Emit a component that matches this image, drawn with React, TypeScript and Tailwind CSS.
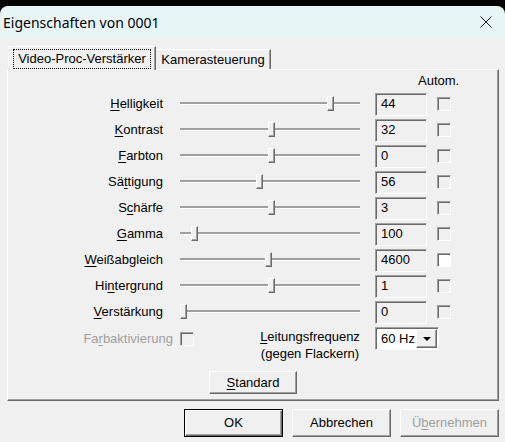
const ROWS = [
  { label: "Helligkeit", key: 0, value: "44", thumb: 150 },
  { label: "Kontrast", key: 0, value: "32", thumb: 91 },
  { label: "Farbton", key: 0, value: "0", thumb: 91 },
  { label: "Sättigung", key: 2, value: "56", thumb: 79 },
  { label: "Schärfe", key: 1, value: "3", thumb: 91 },
  { label: "Gamma", key: 0, value: "100", thumb: 14 },
  { label: "Weißabgleich", key: 0, value: "4600", thumb: 88, white: true },
  { label: "Hintergrund", key: 2, value: "1", thumb: 91 },
  { label: "Verstärkung", key: 0, value: "0", thumb: 3 },
];

const SUNKEN =
  "border border-t-[#a0a0a0] border-l-[#a0a0a0] border-r-white border-b-white shadow-[inset_1px_1px_0_#696969]";
const RAISED =
  "border border-t-white border-l-white border-r-[#696969] border-b-[#696969] shadow-[inset_-1px_-1px_0_#a0a0a0]";

function Key({ text, at }: { text: string; at: number }) {
  return (
    <>
      {text.slice(0, at)}
      <span className="underline underline-offset-[2px]">{text[at]}</span>
      {text.slice(at + 1)}
    </>
  );
}

function Slider({ thumb }: { thumb: number }) {
  return (
    <div className="relative ml-[17px] h-[18px] w-[180px]">
      <div className="absolute inset-x-0 top-[7px] h-[3px] border-b border-white bg-[#a0a0a0]" />
      <div
        className={`absolute top-[1px] h-[15px] w-[7px] bg-[#f0f0f0] ${RAISED}`}
        style={{ left: thumb - 3 }}
      />
    </div>
  );
}

function Check({ white }: { white?: boolean }) {
  return <div className={`h-[14px] w-[14px] ${SUNKEN} ${white ? "bg-white" : "bg-[#f0f0f0]"}`} />;
}

export default function App() {
  return (
    <div className="h-[442px] w-[505px] overflow-hidden bg-black pt-[6px] font-['Liberation_Sans',Arial,sans-serif] text-[13px] text-black">
      {/* title bar */}
      <div className="flex h-[32px] items-center justify-between rounded-t-[8px] bg-[#e8f5f7] pl-[3px] pr-[13px]">
        <span className="font-['Noto_Sans',sans-serif] text-[14px]">Eigenschaften von 0001</span>
        <svg width="12" height="12" viewBox="0 0 12 12">
          <path d="M0.5 0.5L11.5 11.5M11.5 0.5L0.5 11.5" stroke="#1b1b1b" strokeWidth="1" />
        </svg>
      </div>

      <div className="flex h-[404px] flex-col bg-[#f0f0f0] pl-[7px] pr-[6px] pt-[8px]">
        {/* tabs */}
        <div className="flex h-[23px] items-end pl-[1px]">
          <div className="relative z-10 -mb-px flex h-[24px] w-[148px] items-center justify-center border-l border-t border-r border-l-white border-t-white border-r-[#696969] bg-[#f0f0f0] shadow-[inset_-1px_0_0_#a0a0a0]">
            <span className="border border-dotted border-black px-[4px] leading-[18px]">Video-Proc-Verstärker</span>
          </div>
          <div className="flex h-[20px] w-[115px] items-center justify-center border-t border-r border-t-white border-r-[#696969] shadow-[inset_-1px_0_0_#a0a0a0]">
            Kamerasteuerung
          </div>
        </div>

        {/* panel */}
        <div className={`h-[332px] ${RAISED}`}>
          <div className="flex h-[21px] items-center pl-[410px]">Autom.</div>
          {ROWS.map((r) => (
            <div key={r.label} className="flex h-[26px] items-center">
              <div className="w-[155px] text-right">
                <Key text={r.label} at={r.key} />
              </div>
              <Slider thumb={r.thumb} />
              <div className={`ml-[15px] flex h-[23px] w-[52px] items-center bg-[#f0f0f0] pl-[5px] ${SUNKEN}`}>
                {r.value}
              </div>
              <div className="ml-[10px]">
                <Check white={r.white} />
              </div>
            </div>
          ))}

          <div className="mt-[2px] flex items-start">
            <div className="flex h-[23px] items-center">
              <span className="w-[165px] text-right text-[#a0a0a0]">
                <Key text="Farbaktivierung" at={2} />
              </span>
              <div className="ml-[7px]">
                <Check />
              </div>
            </div>
            <div className="ml-[61px] mt-[1px] w-[110px] text-center leading-[17px]">
              <Key text="Leitungsfrequenz" at={0} />
              <br />
              (gegen Flackern)
            </div>
            <div className={`ml-[10px] flex h-[23px] w-[64px] items-center bg-white pr-[1px] ${SUNKEN}`}>
              <span className="flex-1 pl-[5px]">60 Hz</span>
              <div className={`flex h-[19px] w-[21px] items-center justify-center bg-[#f0f0f0] ${RAISED}`}>
                <svg width="8" height="4" viewBox="0 0 8 4">
                  <path d="M0 0H8L4 4Z" fill="#000" />
                </svg>
              </div>
            </div>
          </div>

          <button className={`ml-[201px] mt-[9px] flex h-[23px] w-[88px] items-center justify-center bg-[#f0f0f0] ${RAISED}`}>
            <Key text="Standard" at={0} />
          </button>
        </div>

        {/* dialog buttons */}
        <div className="mt-[8px] flex justify-end gap-[9px]">
          <button className="flex h-[28px] w-[99px] items-center justify-center border border-black bg-[#f0f0f0] shadow-[inset_1px_1px_0_#fff,inset_-1px_-1px_0_#696969,inset_-2px_-2px_0_#a0a0a0]">
            OK
          </button>
          <button className={`flex h-[28px] w-[99px] items-center justify-center bg-[#f0f0f0] ${RAISED}`}>
            Abbrechen
          </button>
          <button className={`flex h-[28px] w-[99px] items-center justify-center bg-[#f0f0f0] text-[#a0a0a0] ${RAISED}`}>
            <Key text="Übernehmen" at={1} />
          </button>
        </div>
      </div>
    </div>
  );
}
